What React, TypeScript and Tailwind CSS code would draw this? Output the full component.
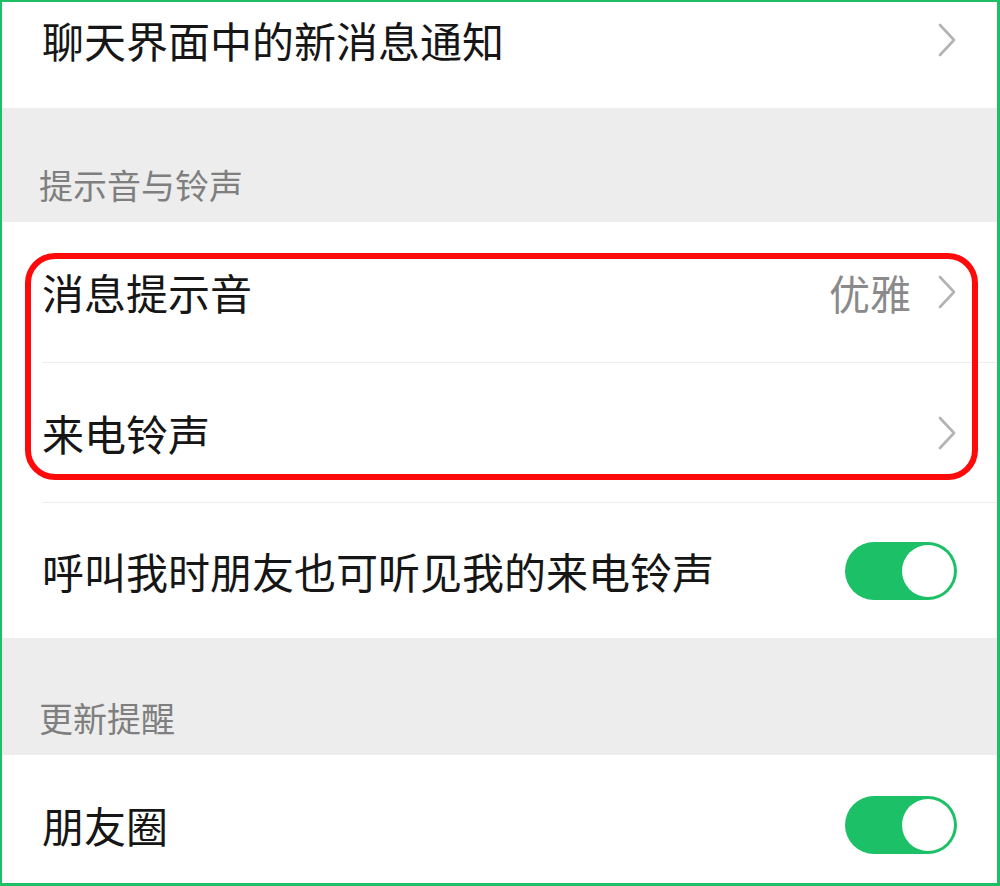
import type { ReactNode } from "react";

const FONT = {
  fontFamily: '"Noto Sans CJK SC", "Noto Sans", sans-serif',
};

function Chevron() {
  return (
    <svg width="20" height="34" viewBox="0 0 20 34" className="shrink-0">
      <polyline
        points="3,2 17,17 3,32"
        fill="none"
        stroke="#b3b3b3"
        strokeWidth="2.6"
        strokeLinecap="round"
        strokeLinejoin="round"
      />
    </svg>
  );
}

function Toggle() {
  return (
    <div className="flex h-[58px] w-[112px] shrink-0 items-center justify-end rounded-full bg-[#1cc066] p-[3px]">
      <div className="h-[52px] w-[52px] rounded-full bg-white" />
    </div>
  );
}

function Row({
  label,
  value,
  right,
  height,
  divider,
  extra = "",
}: {
  label: string;
  value?: string;
  right: ReactNode;
  height: string;
  divider?: boolean;
  extra?: string;
}) {
  return (
    <div className="bg-white pl-[40px]">
      <div
        className={`flex ${height} ${extra} items-center justify-between pr-[40px] ${
          divider ? "border-b border-[#ededed]" : ""
        }`}
      >
        <span className="text-[42px] leading-none text-[#161616]">{label}</span>
        <div className="flex items-center gap-[26px]">
          {value ? (
            <span className="text-[41px] leading-none text-[#8a8a8a]">{value}</span>
          ) : null}
          {right}
        </div>
      </div>
    </div>
  );
}

function SectionHeader({ title, height }: { title: string; height: string }) {
  return (
    <div className={`flex ${height} items-end bg-[#ededed] pb-[20px] pl-[37px]`}>
      <span className="text-[34px] leading-[34px] text-[#7f7f7f]">{title}</span>
    </div>
  );
}

export default function App() {
  return (
    <div
      style={FONT}
      className="relative h-[886px] w-[1000px] overflow-hidden border-t-2 border-r-[3px] border-b-[3px] border-l-2 border-[#1fbf66] bg-white"
    >
      <div className="flex flex-col">
        {/* 上端で切れている行 */}
        <Row
          label="聊天界面中的新消息通知"
          right={<Chevron />}
          height="h-[106px]"
          extra="pb-[30px]"
        />
        <SectionHeader title="提示音与铃声" height="h-[114px]" />
        <Row label="消息提示音" value="优雅" right={<Chevron />} height="h-[141px]" divider />
        <Row label="来电铃声" right={<Chevron />} height="h-[140px]" divider />
        <Row label="呼叫我时朋友也可听见我的来电铃声" right={<Toggle />} height="h-[135px]" />
        <SectionHeader title="更新提醒" height="h-[117px]" />
        <Row label="朋友圈" right={<Toggle />} height="h-[140px]" />
      </div>

      {/* 赤枠の注釈 */}
      <div className="pointer-events-none absolute top-[251px] left-[23px] h-[227px] w-[953px] rounded-[30px] border-[6px] border-[#ff0a0a]" />
    </div>
  );
}
